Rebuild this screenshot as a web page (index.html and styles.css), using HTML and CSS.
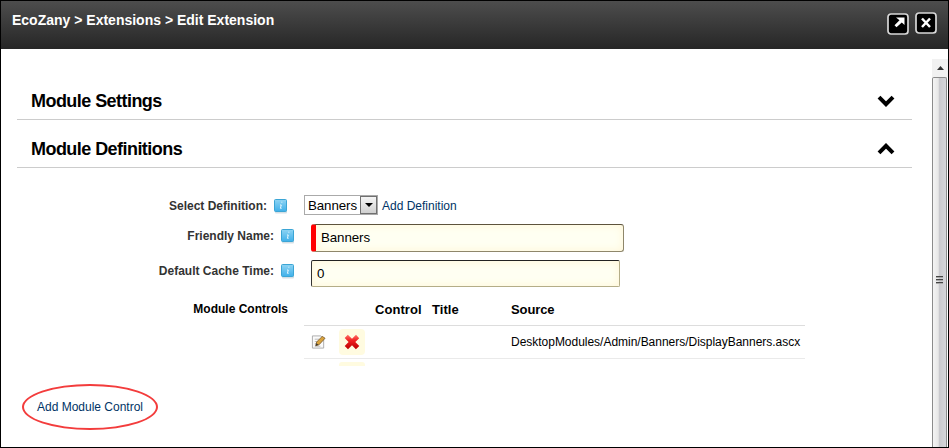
FILE: index.html
```html
<!DOCTYPE html>
<html lang="en">
<head>
<meta charset="utf-8">
<title>Edit Extension</title>
<link rel="stylesheet" href="styles.css">
</head>
<body>
<svg class="defs" width="0" height="0">
  <defs>
    <linearGradient id="blue" x1="0" y1="0" x2="0" y2="1"><stop offset="0" stop-color="#8fd4f3"/><stop offset="1" stop-color="#3fb0ea"/></linearGradient>
    <linearGradient id="red" x1="0" y1="0" x2="0" y2="1"><stop offset="0" stop-color="#ff7068"/><stop offset=".4" stop-color="#f02020"/><stop offset="1" stop-color="#b90000"/></linearGradient>
    <symbol id="info" viewBox="0 0 14 15">
      <rect x="1" y="2" width="12" height="12.5" rx="1" fill="#d5dfe5"/>
      <rect x=".5" y=".5" width="12" height="12" rx="1" fill="url(#blue)" stroke="#3ba5d5"/>
      <path d="M7.400 3.200h.9M6 6h1.300L6.400 9.300h1.200" fill="none" stroke="#e8f8ff" stroke-width="1"/>
    </symbol>
  </defs>
</svg>
<div class="dialog">
  <header class="bar">
    <h1 class="crumb">EcoZany &gt; Extensions &gt; Edit Extension</h1>
    <div class="tools">
      <svg class="tool tool-max" viewBox="0 0 22 22"><rect x="1" y="1" width="20" height="20" rx="3" fill="#000" stroke="#d8d8d8" stroke-width="1.7"/><path d="M9 4.500h8.500V12l-2.700-2.500-5.300 4.700-2-1.900 5-5z" fill="#fff"/></svg>
      <svg class="tool" viewBox="0 0 22 22"><rect x="1" y="1" width="20" height="20" rx="3" fill="#000" stroke="#d8d8d8" stroke-width="1.7"/><path d="M7 6.500l8 8.500M15 6.500l-8 8.500" stroke="#fff" stroke-width="2.500"/></svg>
    </div>
  </header>
  <div class="body">
    <main class="content">
      <h2 class="section first"><span>Module Settings</span><svg class="chev" viewBox="0 0 18 12"><path d="M2 2.200l7 7 7-7" fill="none" stroke="#000" stroke-width="4"/></svg></h2>
      <h2 class="section"><span>Module Definitions</span><svg class="chev" viewBox="0 0 18 12"><path d="M2 9.800l7-7 7 7" fill="none" stroke="#000" stroke-width="4"/></svg></h2>
      <div class="row row-select">
        <div class="label narrow"><span>Select Definition:</span><svg class="info"><use href="#info"/></svg></div>
        <div class="select"><span>Banners</span><i class="drop"><svg viewBox="0 0 8 4"><path d="M0 0h8L4 4z"/></svg></i></div>
        <a class="link add">Add Definition</a>
      </div>
      <div class="row row-name">
        <div class="label"><span>Friendly Name:</span><svg class="info"><use href="#info"/></svg></div>
        <div class="field required">Banners</div>
      </div>
      <div class="row row-cache">
        <div class="label"><span>Default Cache Time:</span><svg class="info"><use href="#info"/></svg></div>
        <div class="field cache">0</div>
      </div>
      <div class="row row-controls">
        <div class="label controls-label"><span>Module Controls</span></div>
        <div class="table">
          <div class="tr head"><span></span><span></span><span>Control</span><span>Title</span><span class="source-head">Source</span></div>
          <div class="tr line">
            <svg class="edit" viewBox="0 0 16 16"><path d="M1.500 1.500h9l3 3v10h-12z" fill="#fafafa" stroke="#aaa"/><path d="M4 5h5M4 7.500h4M4 10h3M4 12.500h6" stroke="#bbb"/><path d="M5 12l1-4 6-6 3 2-6.500 7z" fill="#d9a23c" stroke="#725020" stroke-width=".8"/><path d="M5 12l.8-2.700 2 1.700z" fill="#333"/></svg>
            <span class="del"><svg viewBox="0 0 16 16"><path d="M3.800.8L8 4.800 12 .800l3.200 3.400L11.300 8l4 4-3.400 3.200L8 11.300l-4 3.900L.7 12l3.900-4L.7 4z" fill="url(#red)"/></svg></span>
            <span></span><span></span><span class="src">DesktopModules/Admin/Banners/DisplayBanners.ascx</span>
          </div>
          <div class="ghost"></div>
        </div>
      </div>
      <div class="callout"><a class="link">Add Module Control</a></div>
    </main>
    <div class="scroll">
      <div class="up"><svg viewBox="0 0 7 4"><path d="M0 4h7L3.500 0z" fill="#333"/></svg></div>
      <div class="thumb"><svg viewBox="0 0 7 8"><path d="M0 .5h7M0 3.500h7M0 6.500h7" stroke="#444"/><path d="M0 1.500h7M0 4.500h7M0 7.500h7" stroke="#aaa"/></svg></div>
    </div>
  </div>
</div>
</body>
</html>
```
FILE: styles.css
```css
* { box-sizing: border-box; }
body { margin: 0; font-family: "Liberation Sans", Arial, sans-serif; font-size: 12px; color: #000; }
.defs { display: block; height: 0; }
svg { display: block; flex: none; }
span, a { white-space: nowrap; }
.dialog { width: 949px; height: 448px; border: 1px solid #000; background: #fff; overflow: hidden; display: flex; flex-direction: column; }
.bar { height: 48px; flex: none; background: linear-gradient(#4d4d4d, #262626); display: flex; justify-content: space-between; padding: 0 11px; }
.crumb { margin: 11px 0 0; font-size: 14px; line-height: 16px; color: #fff; white-space: nowrap; }
.tools { display: flex; gap: 6px; padding-top: 11px; }
.tool { width: 22px; height: 22px; }
.tool-max { margin-top: 1px; }
.body { flex: 1; display: flex; justify-content: space-between; min-height: 0; }
.content { width: 895px; margin-left: 16px; }
.section { margin: 0; height: 48px; border-bottom: 1px solid #ccc; display: flex; align-items: center; justify-content: space-between; padding: 10px 17px 0 14px; font-size: 18px; line-height: 20px; letter-spacing: -0.55px; }
.section.first { height: 71px; padding-top: 33px; }
.chev { width: 18px; height: 12px; }
.row { display: flex; }
.row-select { height: 56px; padding-top: 27px; }
.row-name { height: 36px; }
.row-cache { height: 38px; }
.label { width: 278px; margin-right: 16px; display: flex; justify-content: flex-end; gap: 7px; padding-top: 5px; font-weight: bold; line-height: 14px; color: #333; }
.label.narrow { width: 271px; padding-top: 4px; }
.row-cache .label { padding-top: 4px; }
.label .info { width: 14px; height: 15px; }
.controls-label { width: 271px; margin-right: 16px; padding-top: 4px; color: #000; }
.select { width: 74px; height: 20px; border: 1px solid #aaa; display: flex; justify-content: space-between; font-size: 13.330px; line-height: 20px; padding-left: 3px; letter-spacing: -0.1px; }
.drop { width: 17px; height: 18px; border: 1px solid #707070; background: linear-gradient(#f5f5f5, #d0d0d0); display: flex; align-items: center; justify-content: center; }
.drop svg { width: 8px; height: 4px; }
.link { color: #036; line-height: 14px; }
.add { margin: 4px 0 0 4px; }
.field { height: 28px; border: 1px solid #8f876b; border-top-color: #5d533c; border-radius: 3px; background: #fffff2; box-shadow: inset 0 0 8px #fff5d5; font-size: 13.330px; line-height: 26px; letter-spacing: -0.1px; }
.required { width: 313px; border-left: 5px solid #f00; padding-left: 5px; }
.cache { width: 309px; height: 27px; border-color: #222 #b4ad88 #b4ad88 #333; border-radius: 2px; padding-left: 5px; line-height: 26px; }
.table { width: 501px; }
.tr { display: grid; grid-template-columns: 35px 36px 57px 79px 294px; align-items: center; }
.head { height: 28px; border-bottom: 1px solid #ddd; font-size: 13px; font-weight: bold; padding-bottom: 4px; letter-spacing: 0.05px; }
.source-head { letter-spacing: -0.1px; }
.line { height: 33px; border-bottom: 1px solid #eaeaea; }
.src { letter-spacing: -0.02px; }
.edit { width: 15px; height: 16px; margin-left: 7px; }
.del { width: 26px; height: 26px; border-radius: 4px; background: #fffbe0; display: flex; align-items: center; justify-content: center; }
.del svg { width: 16px; height: 16px; }
.ghost { width: 26px; height: 4px; margin: 3px 0 0 35px; background: #fffbe0; border-radius: 3px 3px 0 0; }
.callout { width: 136px; height: 46px; margin: 18px 0 0 5px; border: 2px solid #f33c3c; border-radius: 50%; display: flex; align-items: center; justify-content: center; }
.scroll { width: 16px; padding-top: 10px; display: flex; flex-direction: column; background: #fff; }
.up { height: 18px; flex: none; background: #f1f1f1; display: flex; align-items: center; justify-content: center; }
.up svg { width: 7px; height: 4px; }
.thumb { flex: 1; margin-right: 1px; border: 1px solid #8b8b8b; border-bottom: 0; border-radius: 2px 2px 0 0; background: linear-gradient(90deg, #f4f4f4, #e7e7e7 40%, #cacace 50%, #d5d5d9); padding: 198px 0 0 3px; }
.thumb svg { width: 7px; height: 8px; }
```
